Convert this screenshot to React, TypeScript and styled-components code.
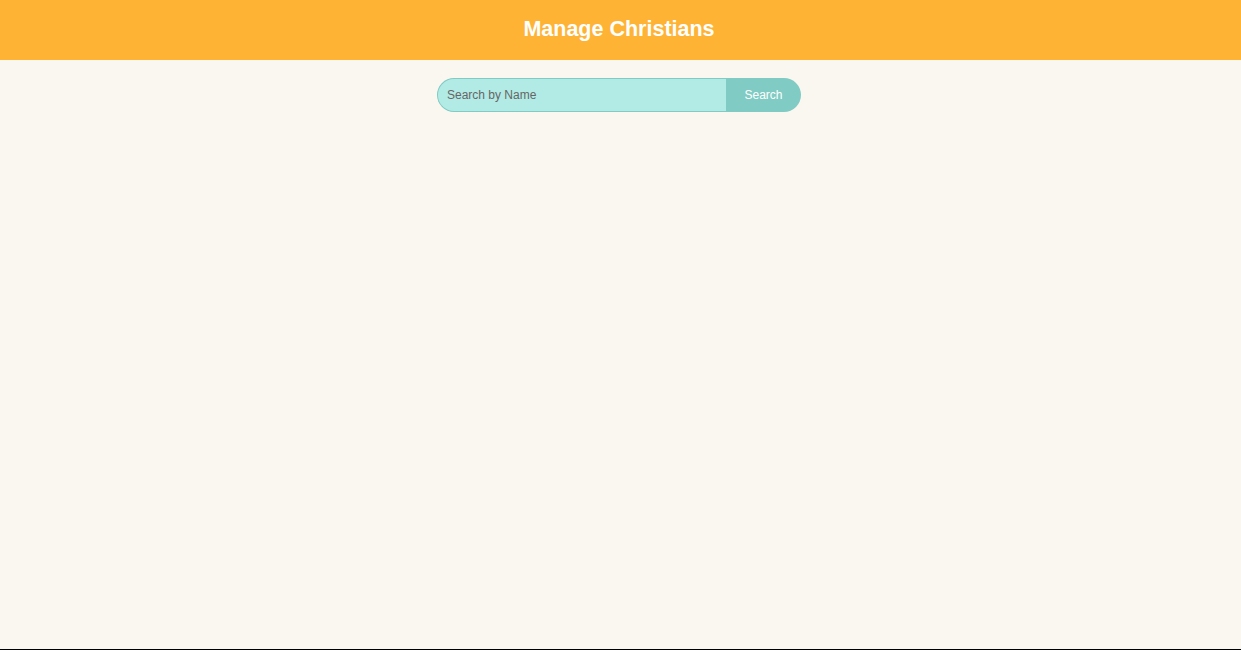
import React, { useState } from "react";
import styled, { createGlobalStyle } from "styled-components";

const GlobalStyle = createGlobalStyle`
    html, body {
        margin: 0;
        padding: 0;
        background: #faf7f0;
        font-family: "Liberation Sans", Arial, sans-serif;
    }
`;

const Page = styled.div`
    min-height: 100vh;
    box-sizing: border-box;
    display: flex;
    flex-direction: column;
    background: #faf7f0;
    border-bottom: 1px solid #000;
`;

const Header = styled.header`
    height: 60px;
    background: #ffb335;
    display: flex;
    align-items: center;
    justify-content: center;
    padding-right: 3px;
`;

const Title = styled.h1`
    margin: 0 0 2px;
    font-size: 21.5px;
    font-weight: bold;
    color: #fff;
`;

const SearchBar = styled.form`
    display: flex;
    justify-content: center;
    margin-top: 18px;
    padding-right: 3px;
`;

const SearchInput = styled.input`
    width: 289px;
    height: 34px;
    box-sizing: border-box;
    padding: 0 9px;
    border: 1px solid #80cbc4;
    border-right: none;
    border-radius: 17px 0 0 17px;
    background: #b2ebe5;
    font-family: "Liberation Sans", Arial, sans-serif;
    font-size: 12px;
    color: #333;
    outline: none;

    &::placeholder {
        color: #666;
    }
`;

const SearchButton = styled.button`
    width: 75px;
    height: 34px;
    border: none;
    border-radius: 0 17px 17px 0;
    background: #80cbc4;
    color: #fff;
    font-family: "Liberation Sans", Arial, sans-serif;
    font-size: 12px;
    cursor: pointer;
`;

const App: React.FC = () => {
    const [query, setQuery] = useState("");

    return (
        <Page>
            <GlobalStyle />
            <Header>
                <Title>Manage Christians</Title>
            </Header>
            <SearchBar onSubmit={(e) => e.preventDefault()}>
                <SearchInput
                    placeholder="Search by Name"
                    value={query}
                    onChange={(e) => setQuery(e.target.value)}
                />
                <SearchButton type="submit">Search</SearchButton>
            </SearchBar>
        </Page>
    );
};

export default App;
